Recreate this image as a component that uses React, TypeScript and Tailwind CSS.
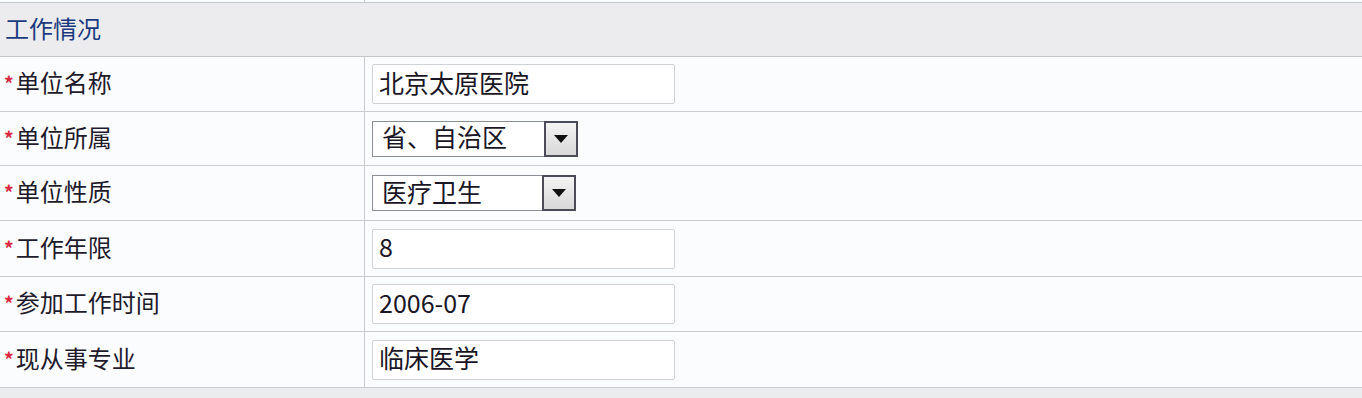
import React from "react";

const font = { fontFamily: '"Noto Sans CJK SC", "Noto Sans", sans-serif' };

function Label({ text }: { text: string }) {
  return (
    <div className="w-[365px] shrink-0 h-full border-r border-[#c9ccd1] flex items-center pl-[4px]">
      <span className="text-[#d8283c] text-[19px] font-bold leading-none mr-[2px] mt-[-3px]">*</span>
      <span className="text-[24px] text-[#1f1a2c] leading-none mt-[-4px]">{text}</span>
    </div>
  );
}

function TextBox({ value }: { value: string }) {
  return (
    <div className="ml-[7px] w-[303px] h-[40px] border border-[#cfd2d7] rounded-[2px] bg-white flex items-center pl-[6px]">
      <span className="text-[25px] text-[#1a1626] leading-none mt-[-4px]">{value}</span>
    </div>
  );
}

function SelectBox({ value, width }: { value: string; width: number }) {
  return (
    <div
      className="ml-[7px] h-[36px] border border-[#8c8e96] bg-white flex items-stretch"
      style={{ width }}
    >
      <div className="flex-1 flex items-center pl-[9px]">
        <span className="text-[25px] text-[#1a1626] leading-none mt-[-4px]">{value}</span>
      </div>
      <div className="w-[34px] border-[2px] border-[#4b4b5a] bg-gradient-to-b from-[#f4f4f4] to-[#d8d8d8] flex items-center justify-center mt-[-1px] mb-[-1px] mr-[-1px]">
        <svg width="16" height="10" viewBox="0 0 16 10">
          <polygon points="1,1 15,1 8,9" fill="#111" />
        </svg>
      </div>
    </div>
  );
}

function Row({ h, children }: { h: number; children: React.ReactNode }) {
  return (
    <div className="flex items-center border-b border-[#c9ccd1] bg-[#fbfcfe]" style={{ height: h }}>
      {children}
    </div>
  );
}

export default function App() {
  return (
    <div className="w-[1362px] h-[398px] overflow-hidden bg-[#fbfcfe]" style={font}>
      <div className="h-[2px] flex">
        <div className="w-[365px] border-r border-[#c9ccd1]" />
      </div>
      <div className="h-[55px] border-y border-[#c5c8cd] bg-[#ececee] flex items-center pl-[5px]">
        <span className="text-[24px] text-[#1b3b7e] leading-none mt-[-4px]">工作情况</span>
      </div>
      <Row h={55}>
        <Label text="单位名称" />
        <TextBox value="北京太原医院" />
      </Row>
      <Row h={54}>
        <Label text="单位所属" />
        <SelectBox value="省、自治区" width={206} />
      </Row>
      <Row h={55}>
        <Label text="单位性质" />
        <SelectBox value="医疗卫生" width={204} />
      </Row>
      <Row h={56}>
        <Label text="工作年限" />
        <TextBox value="8" />
      </Row>
      <Row h={55}>
        <Label text="参加工作时间" />
        <TextBox value="2006-07" />
      </Row>
      <Row h={56}>
        <Label text="现从事专业" />
        <TextBox value="临床医学" />
      </Row>
      <div className="h-[10px] bg-[#ebecee]" />
    </div>
  );
}
